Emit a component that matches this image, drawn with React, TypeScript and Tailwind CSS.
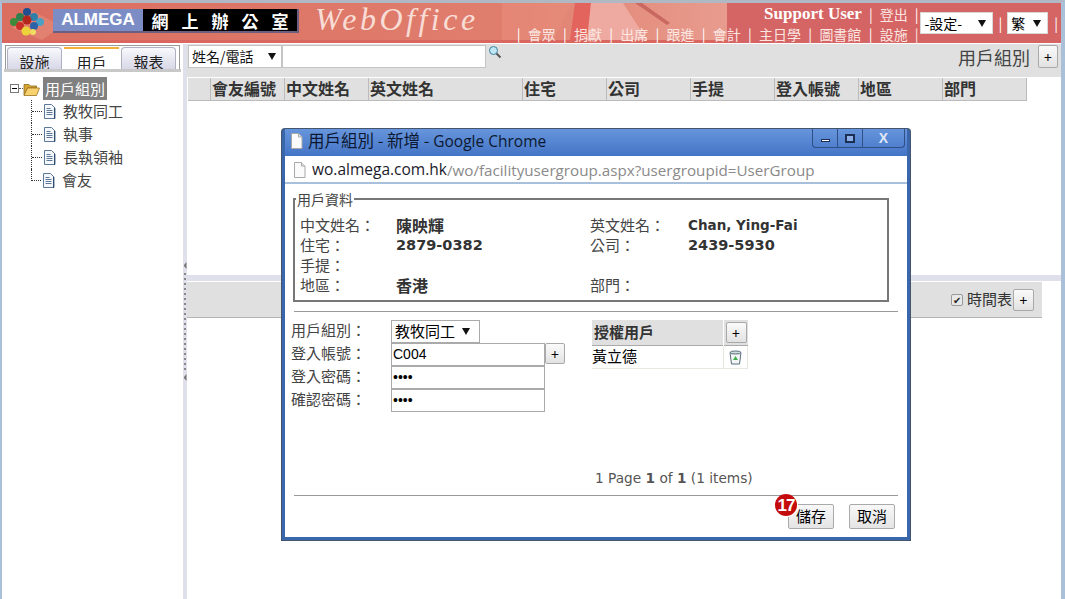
import React from 'react';

const cjk = "font-['Noto_Sans_CJK_TC','Liberation_Sans',sans-serif]";

const columns = [
  { label: '', width: 'w-[23px]' },
  { label: '會友編號', width: 'w-[74px]' },
  { label: '中文姓名', width: 'w-[84px]' },
  { label: '英文姓名', width: 'w-[154px]' },
  { label: '住宅', width: 'w-[84px]' },
  { label: '公司', width: 'w-[84px]' },
  { label: '手提', width: 'w-[84px]' },
  { label: '登入帳號', width: 'w-[84px]' },
  { label: '地區', width: 'w-[84px]' },
  { label: '部門', width: 'w-[84px]' },
];

const navItems = ['會眾', '捐獻', '出席', '跟進', '會計', '主日學', '圖書館', '設施'];
const treeItems = ['教牧同工', '執事', '長執領袖', '會友'];

const DocIcon = () => (
  <svg width="13" height="15" viewBox="0 0 13 15" className="shrink-0">
    <path d="M1.5 .5h7l3.500 3.500v10.500h-10.500z" fill="#f4f7fb" stroke="#5d7896" />
    <path d="M3.500 4.500h4M3.500 6.500h6M3.500 8.500h6M3.500 10.500h6" stroke="#5d7896" />
    <path d="M11.500 4v11" stroke="#2f4d70" />
  </svg>
);

const BlankPage = () => (
  <svg width="13" height="16" viewBox="0 0 13 16" className="shrink-0">
    <path d="M1.500 .5h7l3.500 3.500v11.500h-10.500z" fill="#fbfbfb" stroke="#a8a8a8" />
    <path d="M8.500 .5v3.500h3.500" fill="#e4e4e4" stroke="#a8a8a8" />
  </svg>
);

const FolderIcon = () => (
  <svg width="17" height="14" viewBox="0 0 17 14" className="shrink-0">
    <path d="M1 2.500h5l1.500 1.500h6v2h-9l-3 7h-.5z" fill="#d9a432" stroke="#8a6a20" strokeWidth=".8" />
    <path d="M4.500 6h12l-3 7.500h-12.500z" fill="#f7d26e" stroke="#9a7420" strokeWidth=".8" />
  </svg>
);

const Caret = () => (
  <svg width="8" height="7" viewBox="0 0 8 7" className="shrink-0">
    <path d="M0 0h8l-4 7z" fill="#111" />
  </svg>
);

const PlusButton = ({ className }: { className: string }) => (
  <div className={`flex items-center justify-center rounded-[2px] border border-[#a9a9a9] bg-gradient-to-b from-[#fafafa] to-[#e2e2e2] text-[14px] leading-none text-black ${className}`}>
    +
  </div>
);

const Logo = () => (
  <svg width="36" height="30" viewBox="0 0 36 30" className="shrink-0">
    <circle cx="18" cy="6" r="4" fill="#1f4f8f" />
    <circle cx="11" cy="11" r="4" fill="#2f7f4f" />
    <circle cx="25" cy="11" r="4" fill="#2f7fa8" />
    <circle cx="5" cy="16" r="4" fill="#3d8a3a" />
    <circle cx="18" cy="14" r="4.500" fill="#b3261e" />
    <circle cx="31" cy="16" r="4" fill="#4a9fc4" />
    <circle cx="11" cy="20" r="4" fill="#c9302a" />
    <circle cx="25" cy="20" r="4" fill="#2b62a8" />
    <circle cx="17" cy="25" r="4.500" fill="#ecd33a" />
    <circle cx="24" cy="26" r="3" fill="#f0dd62" />
  </svg>
);

const Header = () => (
  <header className="relative flex h-[40px] shrink-0 items-stretch bg-[#d56464]">
    <svg width="725" height="40" viewBox="0 0 725 40" className="absolute top-0 left-0">
      <defs>
        <linearGradient id="hdr" x1="0" x2="1" y1="0" y2="0">
          <stop offset="0" stopColor="#da6e60" />
          <stop offset=".7" stopColor="#e07e6e" />
          <stop offset="1" stopColor="#e89c8e" />
        </linearGradient>
      </defs>
      <rect width="725" height="37" fill="url(#hdr)" />
      <rect y="37" width="725" height="3" fill="#d9675f" />
      <path d="M500 0l70 0-18 37h-52zM30 8l30 15-20 14-30-12z" fill="#e88c7c" opacity=".6" />
      <path d="M573 0h16l-3 37h-18z" fill="#e2645c" />
      <path d="M589 0h32l24 37h-60z" fill="#eeaaa0" />
      <path d="M640 0l28 20-3 2-32-22z" fill="#c86860" />
    </svg>
    <div className="relative ml-[7px] flex items-center pb-[4px]">
      <Logo />
      <div className="ml-[8px] flex h-[24px] w-[246px] shrink-0 items-stretch border-r-2 border-b-2 border-[#6a5f80]">
        <div className="flex w-[90px] items-center justify-center bg-[#7c8dc6] font-['Liberation_Sans',sans-serif] text-[17px] font-bold text-white">
          ALMEGA
        </div>
        <div className={`flex flex-1 items-center justify-center gap-[13px] bg-black text-[17px] leading-none font-bold text-white ${cjk}`}>
          <span>網</span><span>上</span><span>辦</span><span>公</span><span>室</span>
        </div>
      </div>
      <div className="ml-[16px] -translate-y-[2px] font-['Liberation_Serif',serif] text-[32px] leading-none tracking-[3.500px] text-[#f8ddd6] italic">
        WebOffice
      </div>
    </div>
    <div className={`relative ml-auto flex items-center pr-[3px] text-white ${cjk}`}>
      <div className="flex flex-col items-end pt-px text-[14px] leading-[20px] whitespace-nowrap">
        <div className="flex items-center">
          <span className="font-['Liberation_Serif',serif] text-[17px] font-bold">Support User</span>
          <span className="mx-[7px]">|</span>
          <span className="text-[#fbe6e2]">登出</span>
          <span className="ml-[7px]">|</span>
        </div>
        <div className="flex items-center text-[#fbe6e2]">
          {navItems.map((item) => (
            <React.Fragment key={item}>
              <span className="mx-[7.250px] text-white">|</span>
              <span>{item}</span>
            </React.Fragment>
          ))}
          <span className="ml-[7px]">|</span>
        </div>
      </div>
      <div className="ml-[2px] flex h-[22px] w-[73px] items-center justify-between border border-[#d8d8d8] bg-white pr-[6px] pl-[3px] text-[14px] text-black">
        -設定-
        <Caret />
      </div>
      <span className="mx-[5px] text-[14px]">|</span>
      <div className="flex h-[22px] w-[41px] items-center justify-between border border-[#d8d8d8] bg-white pr-[6px] pl-[3px] text-[14px] text-black">
        繁
        <Caret />
      </div>
      <span className="ml-[6px] text-[14px]">|</span>
    </div>
  </header>
);

const Sidebar = () => (
  <aside className={`flex w-[181px] shrink-0 flex-col text-[15px] ${cjk}`}>
    <div className="mx-[3px] mt-px flex h-[24px] items-end gap-[2px] border-x border-t border-[#9a9a9a] px-px">
      {['設施', '用戶', '報表'].map((tab) => (
        <div
          key={tab}
          className={`flex h-[22px] w-[55px] justify-center overflow-hidden leading-[28px] text-[#222] ${
            tab === '用戶'
              ? 'border-t-2 border-[#f3b13c] bg-white'
              : 'rounded-t-[4px] border-x border-t border-[#b0b0c0] bg-gradient-to-b from-[#f8f8fc] to-[#d8d8e8]'
          }`}
        >
          {tab}
        </div>
      ))}
    </div>
    <div className="mx-[2px] h-[3px] bg-[#c8c8c8]" />
    <div className="mt-[5px] flex h-[23px] items-center pl-[8px]">
      <div className="flex h-[9px] w-[9px] items-center justify-center border border-[#777] bg-white">
        <div className="h-px w-[5px] bg-black" />
      </div>
      <div className="w-[4px] border-b border-dotted border-[#555]" />
      <FolderIcon />
      <div className="ml-[3px] bg-[#808080] px-[2px] leading-[23px] text-white">用戶組別</div>
    </div>
    <div className="ml-[29px] text-[#444]">
      {treeItems.map((item, i) => (
        <div
          key={item}
          className={`flex h-[23px] items-center border-dotted border-[#333] ${
            i < treeItems.length - 1 ? 'border-l' : ''
          }`}
        >
          <div
            className={`h-[12px] w-[10px] -translate-y-[6px] border-b border-dotted border-[#333] ${
              i === treeItems.length - 1 ? 'border-l' : ''
            }`}
          />
          <div className="ml-px flex items-center gap-[7px]">
            <DocIcon />
            <span>{item}</span>
          </div>
        </div>
      ))}
    </div>
  </aside>
);

const latinValue = "font-['DejaVu_Sans',sans-serif]";

const InfoField = ({
  label,
  value,
  valueClass,
  labelWidth,
}: {
  label: string;
  value?: string;
  valueClass?: string;
  labelWidth?: string;
}) => (
  <div className="flex h-[20px] items-center leading-[20px]">
    <span className={`${labelWidth ?? 'w-[96px]'} shrink-0 text-[#444]`}>{label}</span>
    {value && <span className={`font-bold text-[#333] ${valueClass ?? 'text-[16px]'}`}>{value}</span>}
  </div>
);

const Dialog = () => (
  <div className={`absolute top-[126px] left-[280px] flex h-[411px] w-[628px] flex-col rounded-t-[3px] border-x-[3px] border-b-[3px] border-[#3a66ac] bg-[#4a7bcb] text-[15px] shadow-[0_0_0_1px_#46556e] ${cjk}`}>
    <div className="flex h-[27px] shrink-0 items-center bg-gradient-to-b from-[#6795dc] to-[#4474c6] pb-[3px] pl-[5px]">
      <BlankPage />
      <span className="ml-[5px] text-[16.500px] leading-none text-[#0c1830]">
        用戶組別 - 新增 - <span className="font-['Open_Sans',sans-serif] text-[15.500px]">Google Chrome</span>
      </span>
      <div className="mr-[2px] mb-[5px] ml-auto flex h-[19px] items-center rounded-b-[4px] border border-t-0 border-[#2f4f85] text-[#123]">
        <div className="flex h-full w-[25px] items-center justify-center border-r border-[#2f4f85]">
          <div className="mt-[5px] h-[3px] w-[9px] border border-[#1b2f55] bg-white" />
        </div>
        <div className="flex h-full w-[25px] items-center justify-center border-r border-[#2f4f85]">
          <div className="h-[9px] w-[10px] border-2 border-[#1b2f55] bg-[#8fb0e6]" />
        </div>
        <div className="flex h-full w-[41px] items-center justify-center font-['Liberation_Sans',sans-serif] text-[14px] leading-none font-bold text-[#dfe8f8]">
          X
        </div>
      </div>
    </div>
    <div className="flex h-[28px] shrink-0 items-center border-b-2 border-[#a9c0dc] bg-white pt-[2px] pl-[8px] font-['Open_Sans',sans-serif]">
      <BlankPage />
      <span className="ml-[6px] text-[15.500px] text-[#1a1a2a]">wo.almega.com.hk</span>
      <span className="text-[15.200px] text-[#8a8a8a]">/wo/facilityusergroup.aspx?usergroupid=UserGroup</span>
    </div>
    <div className="flex flex-1 flex-col bg-white px-[9px]">
      <fieldset className="mt-[7px] mr-[9px] -ml-px h-[111px] shrink-0 border-2 border-[#777] pr-[6px] pl-[5px]">
        <legend className="-ml-[4px] bg-white px-px text-[14px] leading-[16px] text-[#444]">用戶資料</legend>
        <div className="mt-[8px] grid grid-cols-[290px_1fr]">
          <InfoField label="中文姓名：" value="陳映輝" />
          <InfoField label="英文姓名：" labelWidth="w-[98px]" value="Chan, Ying-Fai" valueClass={`${latinValue} text-[13.500px]`} />
          <InfoField label="住宅：" value="2879-0382" valueClass={`${latinValue} text-[14.500px]`} />
          <InfoField label="公司：" labelWidth="w-[98px]" value="2439-5930" valueClass={`${latinValue} text-[14.500px]`} />
          <InfoField label="手提：" />
          <div />
          <InfoField label="地區：" value="香港" />
          <InfoField label="部門：" />
        </div>
      </fieldset>
      <div className="mt-[9px] h-px shrink-0 bg-[#999]" />
      <div className="flex h-[171px] shrink-0 pt-[8px]">
        <div className="grid w-[298px] shrink-0 grid-cols-[97px_154px_1fr] grid-rows-[23px_23px_23px_23px] text-[#444]">
          <span className="-ml-[3px] leading-[19px]">用戶組別：</span>
          <div className="flex h-[23px] w-[89px] items-center justify-between border border-[#aaa] pr-[9px] pl-[3px] text-black">
            教牧同工
            <Caret />
          </div>
          <div />
          <span className="-ml-[3px] leading-[19px]">登入帳號：</span>
          <div className="h-[23px] border border-[#aaa] pl-px font-['Liberation_Sans',sans-serif] text-[14px] leading-[20px] text-black">C004</div>
          <PlusButton className="h-[21px] w-[20px]" />
          <span className="-ml-[3px] leading-[19px]">登入密碼：</span>
          <div className="h-[23px] border border-[#aaa] pl-px font-['Liberation_Sans',sans-serif] text-[14px] leading-[21px] text-black">••••</div>
          <div />
          <span className="-ml-[3px] leading-[19px]">確認密碼：</span>
          <div className="h-[23px] border border-[#aaa] pl-px font-['Liberation_Sans',sans-serif] text-[14px] leading-[21px] text-black">••••</div>
          <div />
        </div>
        <div className="w-[156px] shrink-0">
          <div className="flex h-[26px]">
            <div className="flex w-[131px] items-center border-b border-[#aaa] bg-[#e0e0e0] pl-[2px] font-bold text-[#333]">授權用戶</div>
            <div className="ml-px flex w-[24px] items-center justify-center border-b border-[#aaa] bg-[#e0e0e0]">
              <PlusButton className="h-[21px] w-[21px]" />
            </div>
          </div>
          <div className="flex h-[23px] border-b border-[#e8e8e0]">
            <div className="w-[131px] leading-[20px] text-black">黃立德</div>
            <div className="flex w-[25px] items-center justify-center border-x border-[#e8e8e0]">
              <svg width="13" height="15" viewBox="0 0 13 15">
                <path d="M1 2.500h11l-1.500 11.500h-8z" fill="#f2f6f6" stroke="#5a6e78" />
                <ellipse cx="6.500" cy="2.500" rx="5.500" ry="1.500" fill="#cfdcdc" stroke="#5a6e78" />
                <path d="M6.500 6l2.500 4h-5z" fill="#3fae4a" />
              </svg>
            </div>
          </div>
        </div>
      </div>
      <div className="h-[12px] shrink-0 pl-[301px] font-['DejaVu_Sans',sans-serif] text-[13.700px] leading-none text-[#555]">
        <div className="-mt-[11px] whitespace-nowrap">
          1 Page <b>1</b> of <b>1</b> (1 items)
        </div>
      </div>
      <div className="h-px shrink-0 bg-[#999]" />
      <div className="mt-[8px] mr-[3px] flex justify-end gap-[15px]">
        <div className="relative flex h-[25px] w-[46px] items-center justify-center rounded-[2px] border border-[#aaa] bg-gradient-to-b from-[#f8f8f8] to-[#e4e4e4] text-black">
          儲存
          <div className="absolute -top-[11px] -left-[14px] flex h-[22px] w-[22px] items-center justify-center rounded-full bg-[#c40c0c] font-['Liberation_Sans',sans-serif] text-[17px] leading-none font-bold tracking-[-1px] text-white shadow-[1px_1px_0_#fff]">
            17
          </div>
        </div>
        <div className="flex h-[25px] w-[46px] items-center justify-center rounded-[2px] border border-[#aaa] bg-gradient-to-b from-[#f8f8f8] to-[#e4e4e4] text-black">
          取消
        </div>
      </div>
    </div>
  </div>
);

const Splitter = () => (
  <div className="flex w-[4px] shrink-0 flex-col items-center bg-[#e0e0ec]">
    <div className="mt-[218px] h-[7px] w-[3px] bg-[#777] [clip-path:polygon(100%_0,100%_100%,0_50%)]" />
    <div className="mt-[4px] h-[97px] w-[2px] bg-[repeating-linear-gradient(#888_0_2px,transparent_2px_5px)]" />
    <div className="mt-[4px] h-[7px] w-[3px] bg-[#777] [clip-path:polygon(100%_0,100%_100%,0_50%)]" />
  </div>
);

export default function App() {
  return (
    <div className="relative flex h-[599px] w-[1065px] flex-col overflow-hidden border-t-[3px] border-r-[4px] border-l-[2px] border-t-[#b0b8c4] border-r-[#a9c0d8] border-l-[#a9c0d8] bg-white">
      <Header />
      <div className="h-px shrink-0 bg-white" />
      <div className="flex min-h-0 flex-1">
        <Sidebar />
        <Splitter />
        <main className={`flex min-w-0 flex-1 flex-col ${cjk}`}>
          <div className="flex h-[33px] shrink-0 items-start bg-[#e0e0e0] pt-px pl-px">
            <div className="flex h-[23px] w-[94px] items-center justify-between border border-[#c4c4c4] bg-white pr-[5px] pl-[3px] text-[14px] text-[#111]">
              姓名/電話
              <Caret />
            </div>
            <div className="h-[23px] w-[204px] border border-[#c4c4c4] bg-white" />
            <svg width="14" height="14" viewBox="0 0 14 14" className="ml-[2px]">
              <circle cx="5.500" cy="5.500" r="4" fill="#bfe6f5" stroke="#3d7f9f" />
              <path d="M8.500 8.500l4 4" stroke="#555" strokeWidth="2" />
            </svg>
            <span className="mt-px ml-auto text-[18px] leading-[23px] text-[#444]">用戶組別</span>
            <PlusButton className="mr-[3px] ml-[8px] h-[23px] w-[20px]" />
          </div>
          <div className="h-px shrink-0" />
          <div className="flex h-[23px] shrink-0 text-[16px] font-bold text-[#333]">
            {columns.map((col, i) => (
              <div
                key={i}
                className={`${col.width} shrink-0 border-r border-b border-[#bbb] bg-[#e0e0e0] pl-[1px] leading-[21px] whitespace-nowrap ${i === 0 ? 'ml-px' : ''}`}
              >
                {col.label}
              </div>
            ))}
          </div>
          <div className="h-[174px] shrink-0" />
          <div className="h-[6px] shrink-0 bg-[#e0e0ec]" />
          <div className="mt-px flex h-[36px] w-[855px] shrink-0 items-center justify-end border-b border-[#b4b4b4] bg-[#e0e0e0] pr-[8px] text-[15px] text-[#333]">
            <div className="mr-[4px] flex h-[12px] w-[12px] items-center justify-center rounded-[2px] border border-[#999] bg-[#e8e8e8] text-[10px] leading-none text-[#222]">
              ✔
            </div>
            時間表
            <PlusButton className="ml-px h-[22px] w-[21px]" />
          </div>
        </main>
      </div>
      <Dialog />
    </div>
  );
}
